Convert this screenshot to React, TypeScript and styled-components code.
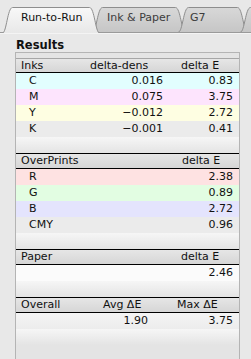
import React from 'react';
import styled, { createGlobalStyle } from 'styled-components';

const Global = createGlobalStyle`
  html, body { margin: 0; padding: 0; background: #e8e8e8; }
  body {
    font-family: "DejaVu Sans", "Liberation Sans", sans-serif;
    font-size: 11px;
    color: #1a1a1a;
  }
`;

const Window = styled.div`
  width: 251px;
  height: 359px;
  display: flex;
  flex-direction: column;
  overflow: hidden;
  background: #e8e8e8;
`;

const TabBar = styled.div`
  display: flex;
  flex: none;
  height: 25px;
  padding: 7px 0 0 2px;
  border-bottom: 1px solid #9a9a9a;
  box-shadow: 0 1px 0 #f4f4f4;
`;

const TabItem = styled.div<{ $active: boolean; $w: number; $pad: number; $z: number; $first: boolean }>`
  position: relative;
  flex: none;
  width: ${(p) => p.$w}px;
  height: ${(p) => (p.$active ? 26 : 25)}px;
  margin-bottom: ${(p) => (p.$active ? -1 : 0)}px;
  margin-left: ${(p) => (p.$first ? 0 : -8)}px;
  z-index: ${(p) => p.$z};
  box-sizing: border-box;
  padding-left: ${(p) => p.$pad}px;
  line-height: 22px;
  color: ${(p) => (p.$active ? '#111' : '#3c3c3c')};
  white-space: nowrap;
`;

const TabShape = styled.svg`
  position: absolute;
  left: 0;
  top: 0;
`;

const TabLabel = styled.span`
  position: relative;
`;

type TabProps = { label: string; active?: boolean; w: number; pad: number; z: number; first?: boolean; id: string };

function Tab({ label, active = false, w, pad, z, first = false, id }: TabProps) {
  const h = active ? 26 : 25;
  const d = `M0.5 ${h} C4.5 ${h} 5.5 0.5 10.5 0.5 L ${w - 10.5} 0.5 C ${w - 5.5} 0.5 ${w - 4.5} ${h} ${w - 0.5} ${h}`;
  return (
    <TabItem $active={active} $w={w} $pad={pad} $z={z} $first={first}>
      <TabShape width={w} height={h}>
        <defs>
          <linearGradient id={id} x1="0" y1="0" x2="0" y2="1">
            {active ? (
              <>
                <stop offset="0" stopColor="#f8f8f8" />
                <stop offset="1" stopColor="#e8e8e8" />
              </>
            ) : (
              <>
                <stop offset="0" stopColor="#d8d8d8" />
                <stop offset="1" stopColor="#c6c6c6" />
              </>
            )}
          </linearGradient>
        </defs>
        <path d={d} fill={`url(#${id})`} stroke="#8e8e8e" strokeWidth="1" />
      </TabShape>
      <TabLabel>{label}</TabLabel>
    </TabItem>
  );
}

const Content = styled.div`
  flex: 1;
  min-height: 0;
  display: flex;
  flex-direction: column;
  padding: 0 11px 0 15px;
`;

const Title = styled.div`
  font-weight: bold;
  font-size: 11.5px;
  line-height: 14px;
  padding: 5px 0 0 1px;
  color: #111;
`;

const Box = styled.div`
  flex: 1;
  border: 1px solid #b4b4b4;
  border-bottom: none;
  background: #e4e4e4;
  padding-top: 5px;
`;

const HeaderRow = styled.div<{ $cols: string; $first?: boolean }>`
  display: grid;
  grid-template-columns: ${(p) => p.$cols};
  height: ${(p) => (p.$first ? 13 : 14)}px;
  line-height: ${(p) => (p.$first ? 13 : 14)}px;
  border-top: 1px solid ${(p) => (p.$first ? '#a6a6a6' : '#000')};
  border-bottom: 1px solid #000;
  background: linear-gradient(#e6e6e6, #d6d6d6);
  color: #111;
`;

const DataRow = styled.div<{ $cols: string; $tint: string }>`
  display: grid;
  grid-template-columns: ${(p) => p.$cols};
  height: 16px;
  line-height: 16px;
  background: ${(p) => p.$tint};
  color: #111;
`;

const EmptyRow = styled.div`
  height: 16px;
  background: linear-gradient(#f6f6f6, #e4e4e4);
`;

const Cell = styled.div<{ $pl?: number; $pr?: number; $right?: boolean }>`
  padding-left: ${(p) => p.$pl ?? 0}px;
  padding-right: ${(p) => p.$pr ?? 0}px;
  text-align: ${(p) => (p.$right ? 'right' : 'left')};
  white-space: nowrap;
  overflow: hidden;
`;

const INK_COLS = '70px 80px 1fr';
const TWO_COLS = '1fr 72px';
const OVR_COLS = '84px 51px 1fr';

const inks = [
  { k: 'C', d: '0.016', e: '0.83', tint: '#e2fefe' },
  { k: 'M', d: '0.075', e: '3.75', tint: '#fde4fd' },
  { k: 'Y', d: '\u22120.012', e: '2.72', tint: '#fefee2' },
  { k: 'K', d: '\u22120.001', e: '0.41', tint: '#ebebeb' },
];

const overprints = [
  { k: 'R', e: '2.38', tint: '#fee2e2' },
  { k: 'G', e: '0.89', tint: '#e2fde2' },
  { k: 'B', e: '2.72', tint: '#e4e4fd' },
  { k: 'CMY', e: '0.96', tint: '#ebebeb' },
];

export default function App() {
  return (
    <Window>
      <Global />
      <TabBar>
        <Tab id="t1" label="Run-to-Run" active w={98} pad={19} z={10} first />
        <Tab id="t2" label="Ink & Paper" w={94} pad={15} z={1} />
        <Tab id="t3" label="G7" w={70} pad={12} z={2} />
        <Tab id="t4" label="" w={60} pad={12} z={3} />
      </TabBar>
      <Content>
        <Title>Results</Title>
        <Box>
          <HeaderRow $cols={INK_COLS} $first>
            <Cell $pl={5}>Inks</Cell>
            <Cell $pl={4}>delta-dens</Cell>
            <Cell $pl={15}>delta E</Cell>
          </HeaderRow>
          {inks.map((r) => (
            <DataRow key={r.k} $cols={INK_COLS} $tint={r.tint}>
              <Cell $pl={13}>{r.k}</Cell>
              <Cell $right $pr={3}>{r.d}</Cell>
              <Cell $right $pr={6}>{r.e}</Cell>
            </DataRow>
          ))}
          <EmptyRow />

          <HeaderRow $cols={TWO_COLS}>
            <Cell $pl={5}>OverPrints</Cell>
            <Cell $pl={15}>delta E</Cell>
          </HeaderRow>
          {overprints.map((r) => (
            <DataRow key={r.k} $cols={TWO_COLS} $tint={r.tint}>
              <Cell $pl={13}>{r.k}</Cell>
              <Cell $right $pr={6}>{r.e}</Cell>
            </DataRow>
          ))}
          <EmptyRow />

          <HeaderRow $cols={TWO_COLS}>
            <Cell $pl={5}>Paper</Cell>
            <Cell $pl={14}>delta E</Cell>
          </HeaderRow>
          <DataRow $cols={TWO_COLS} $tint="#fbfbfb">
            <Cell />
            <Cell $right $pr={6}>2.46</Cell>
          </DataRow>
          <EmptyRow />

          <HeaderRow $cols={OVR_COLS}>
            <Cell $pl={5}>Overall</Cell>
            <Cell $pl={3}>Avg ΔE</Cell>
            <Cell $pl={26}>Max ΔE</Cell>
          </HeaderRow>
          <DataRow $cols={OVR_COLS} $tint="linear-gradient(#f4f4f4, #ececec)">
            <Cell />
            <Cell $right $pr={3}>1.90</Cell>
            <Cell $right $pr={6}>3.75</Cell>
          </DataRow>
          <EmptyRow />
        </Box>
      </Content>
    </Window>
  );
}
